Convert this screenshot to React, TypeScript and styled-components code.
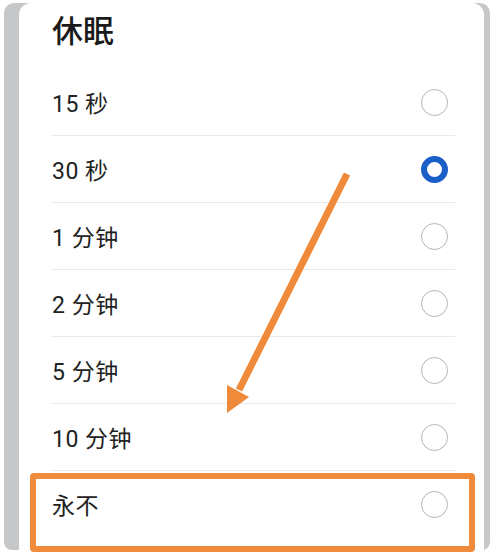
import React, { useState } from "react";
import styled, { createGlobalStyle } from "styled-components";

const options = ["15 秒", "30 秒", "1 分钟", "2 分钟", "5 分钟", "10 分钟", "永不"];

export default function App() {
  const [selected, setSelected] = useState(1);

  return (
    <>
      <GlobalStyle />
      <Page>
        <Frame>
          <Panel>
            <Title>休眠</Title>
            <List>
              {options.map((label, i) => (
                <Row key={label} onClick={() => setSelected(i)}>
                  <Label>{label}</Label>
                  <Radio $checked={selected === i} />
                </Row>
              ))}
            </List>
          </Panel>
        </Frame>

        <Arrow width="500" height="557" viewBox="0 0 500 557">
          <line x1="347" y1="174" x2="239" y2="390" stroke="#ef8a3a" strokeWidth="7" />
          <polygon points="227,413 249,397 227,385" fill="#ef8a3a" />
        </Arrow>
        <Highlight />
      </Page>
    </>
  );
}

const GlobalStyle = createGlobalStyle`
  html, body {
    margin: 0;
    background: #fff;
  }
  body {
    font-family: Roboto, "Noto Sans CJK SC", sans-serif;
  }
`;

const Page = styled.div`
  position: relative;
  width: 500px;
  height: 557px;
  overflow: hidden;
`;

const Frame = styled.div`
  display: flex;
  flex-direction: column;
  width: 486px;
  height: 547px;
  margin: 3px 0 0 4px;
  background: #c6c7c9;
  border-radius: 10px 10px 8px 8px;
`;

const Panel = styled.div`
  flex: 1;
  display: flex;
  flex-direction: column;
  margin: 0 6px 0 15px;
  padding: 0 29px 0 32px;
  background: #fff;
  border-radius: 12px 12px 0 0;
`;

const Title = styled.div`
  height: 40px;
  margin: 6px 0 20px 1px;
  font-family: "Noto Sans CJK SC", sans-serif;
  font-size: 31px;
  font-weight: 500;
  line-height: 40px;
  color: #1a1a1a;
`;

const List = styled.div`
  display: flex;
  flex-direction: column;
`;

const Row = styled.div`
  display: flex;
  align-items: center;
  justify-content: space-between;
  height: 66px;
  border-bottom: 1px solid #e9e9e9;
  cursor: pointer;

  &:last-child {
    border-bottom: none;
  }
`;

const Label = styled.span`
  padding-left: 1px;
  font-size: 23px;
  color: #222;
  letter-spacing: 0.5px;
`;

const Radio = styled.span<{ $checked: boolean }>`
  box-sizing: border-box;
  width: 27px;
  height: 27px;
  margin-right: 7px;
  border-radius: 50%;
  border: ${(p) => (p.$checked ? "6px solid #1a5fc8" : "1.5px solid #b4b4b4")};
  background: #fff;
`;

const Arrow = styled.svg`
  position: absolute;
  left: 0;
  top: 0;
  pointer-events: none;
`;

const Highlight = styled.div`
  position: absolute;
  left: 30px;
  top: 473px;
  width: 445px;
  height: 79px;
  box-sizing: border-box;
  border: 6px solid #ef8b3b;
  border-radius: 4px;
  pointer-events: none;
`;
